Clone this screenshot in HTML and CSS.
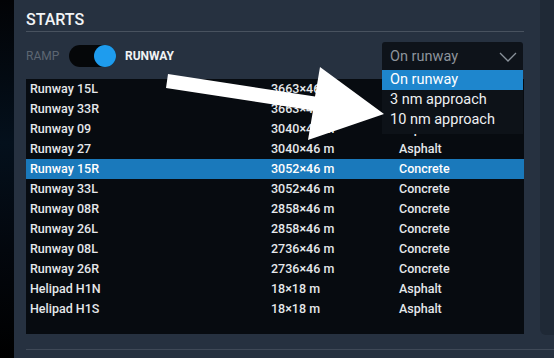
FILE: index.html
```html
<!DOCTYPE html>
<html>
<head>
<meta charset="utf-8">
<link rel="stylesheet" href="styles.css">
</head>
<body>
<div class="app">
  <div class="edge"></div>
  <div class="panel">
    <div class="top">
      <div class="content">
        <div class="title">STARTS</div>
        <div class="controls">
          <span class="ramp">RAMP</span>
          <span class="toggle"><span class="knob"></span></span>
          <span class="runway">RUNWAY</span>
          <div class="select">
            <div class="select-btn">
              <span>On runway</span>
              <svg class="chev" width="18" height="10" viewBox="0 0 18 10"><path d="M1 1 L9 9 L17 1" fill="none" stroke="#8a929b" stroke-width="1.3"/></svg>
            </div>
            <div class="select-list">
              <div class="opt active">On runway</div>
              <div class="opt">3 nm approach</div>
              <div class="opt">10 nm approach</div>
            </div>
          </div>
        </div>
        <div class="table">
          <div class="row"><span>Runway 15L</span><span>3663×46 m</span><span>Concrete</span></div>
          <div class="row"><span>Runway 33R</span><span>3663×46 m</span><span>Concrete</span></div>
          <div class="row"><span>Runway 09</span><span>3040×46 m</span><span>Asphalt</span></div>
          <div class="row"><span>Runway 27</span><span>3040×46 m</span><span>Asphalt</span></div>
          <div class="row sel"><span>Runway 15R</span><span>3052×46 m</span><span>Concrete</span></div>
          <div class="row"><span>Runway 33L</span><span>3052×46 m</span><span>Concrete</span></div>
          <div class="row"><span>Runway 08R</span><span>2858×46 m</span><span>Concrete</span></div>
          <div class="row"><span>Runway 26L</span><span>2858×46 m</span><span>Concrete</span></div>
          <div class="row"><span>Runway 08L</span><span>2736×46 m</span><span>Concrete</span></div>
          <div class="row"><span>Runway 26R</span><span>2736×46 m</span><span>Concrete</span></div>
          <div class="row"><span>Helipad H1N</span><span>18×18 m</span><span>Asphalt</span></div>
          <div class="row"><span>Helipad H1S</span><span>18×18 m</span><span>Asphalt</span></div>
        </div>
      </div>
      <div class="side"></div>
    </div>
    <div class="rule"></div>
  </div>
  <svg class="arrow" width="554" height="358" viewBox="0 0 554 358">
    <polygon points="168,74 315,96.5 320,67 384,114 308,140 313,110.5 166,88" fill="#ffffff"/>
  </svg>
</div>
</body>
</html>
```

FILE: styles.css
```css
* { box-sizing: border-box; }
html, body { margin: 0; padding: 0; }
body {
  width: 554px;
  height: 358px;
  overflow: hidden;
  background: #000;
  font-family: Roboto, "Noto Sans", sans-serif;
}
.app {
  position: relative;
  display: flex;
  width: 554px;
  height: 358px;
}
.edge {
  width: 14px;
  background: linear-gradient(180deg, #020306 0%, #04101c 40%, #03070d 70%, #000 100%);
}
.panel {
  flex: 1;
  background: #263140;
  display: flex;
  flex-direction: column;
}
.top {
  display: flex;
}
.content {
  width: 510px;
  padding-left: 12px;
}
.title {
  padding-top: 10px;
  padding-bottom: 1px;
  height: 32px;
  line-height: 20px;
  font-size: 16px;
  font-weight: 500;
  color: #f2f4f6;
  border-bottom: 1px solid #48525f;
}
.controls {
  margin-top: 10px;
  height: 28px;
  display: flex;
  align-items: center;
  position: relative;
}
.ramp {
  font-size: 12px;
  color: #5d6672;
  width: 43px;
}
.toggle {
  width: 47px;
  height: 22px;
  border-radius: 11px;
  background: #050709;
  display: flex;
  justify-content: flex-end;
}
.knob {
  width: 22px;
  height: 22px;
  border-radius: 50%;
  background: #1e9cee;
}
.runway {
  margin-left: 9px;
  font-size: 12px;
  font-weight: 700;
  color: #f0f2f4;
}
.select {
  margin-left: auto;
  margin-right: 1px;
  width: 141px;
  height: 28px;
  position: relative;
}
.select-btn {
  height: 28px;
  background: #0e131a;
  border-radius: 3px 3px 0 0;
  display: flex;
  align-items: center;
  justify-content: space-between;
  padding: 0 6px 0 8px;
  font-size: 14.5px;
  color: #8d949c;
}
.chev { margin-top: 1px; }
.select-list {
  position: absolute;
  top: 28px;
  left: 0;
  width: 141px;
  background: #0d1218;
  padding-bottom: 4px;
  z-index: 2;
}
.opt {
  height: 20px;
  line-height: 20px;
  padding-left: 8px;
  font-size: 14.5px;
  color: #eef0f2;
}
.opt.active { background: #1e86cd; color: #fff; }
.table {
  margin-top: 9px;
  width: 498px;
  height: 255px;
  background: #070b10;
}
.row {
  display: grid;
  grid-template-columns: 241px 128px 1fr;
  height: 20px;
  line-height: 20px;
  padding-left: 4px;
  font-size: 12.5px;
  font-weight: 500;
  color: #e4e7ea;
}
.row.sel { background: #1a79bb; color: #fff; }
.side {
  margin-left: 16px;
  width: 14px;
  height: 335px;
  background: #1f2936;
  border-bottom-left-radius: 6px;
}
.rule {
  margin-top: 14px;
  margin-left: 12px;
  height: 1px;
  background: #3f4957;
}
.arrow {
  position: absolute;
  left: 0;
  top: 0;
  z-index: 5;
  pointer-events: none;
}
```
